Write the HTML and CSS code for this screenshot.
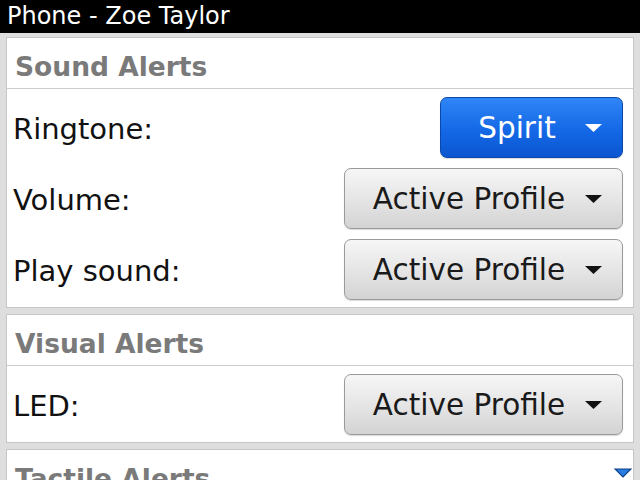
FILE: index.html
```html
<!DOCTYPE html>
<html lang="en">
  <head>
    <meta charset="UTF-8" />
    <meta name="viewport" content="width=device-width, initial-scale=1.0" />
    <title>Phone - Zoe Taylor</title>
    <link rel="stylesheet" href="styles.css">
  </head>
  <body>
    <header class="titlebar">Phone - Zoe Taylor</header>
    <main class="contenido">
      <section class="tarjeta">
        <div class="cabecera">Sound Alerts</div>
        <div class="filas">
          <div class="fila">
            <span class="etiqueta">Ringtone:</span>
            <button class="selector azul corto">
              <span class="valor">Spirit</span>
              <svg class="flecha" width="17" height="8" viewBox="0 0 17 8"><path d="M0 0H17L8.5 8Z" fill="#fff"/></svg>
            </button>
          </div>
          <div class="fila">
            <span class="etiqueta">Volume:</span>
            <button class="selector">
              <span class="valor">Active Profile</span>
              <svg class="flecha" width="17" height="8" viewBox="0 0 17 8"><path d="M0 0H17L8.5 8Z" fill="#111"/></svg>
            </button>
          </div>
          <div class="fila">
            <span class="etiqueta">Play sound:</span>
            <button class="selector">
              <span class="valor">Active Profile</span>
              <svg class="flecha" width="17" height="8" viewBox="0 0 17 8"><path d="M0 0H17L8.5 8Z" fill="#111"/></svg>
            </button>
          </div>
        </div>
      </section>

      <section class="tarjeta">
        <div class="cabecera">Visual Alerts</div>
        <div class="filas">
          <div class="fila">
            <span class="etiqueta">LED:</span>
            <button class="selector">
              <span class="valor">Active Profile</span>
              <svg class="flecha" width="17" height="8" viewBox="0 0 17 8"><path d="M0 0H17L8.5 8Z" fill="#111"/></svg>
            </button>
          </div>
        </div>
      </section>

      <section class="tarjeta">
        <div class="cabecera">Tactile Alerts</div>
      </section>
    </main>

    <!-- indicador de scroll -->
    <svg class="scroll" width="18" height="10" viewBox="0 0 18 10"><path d="M1 1H17L9 9Z" fill="#2a7de0" stroke="#0c3f88" stroke-width="1.2"/></svg>
  </body>
</html>
```

FILE: styles.css
```css
body{
    margin: 0;
    width: 640px;
    height: 480px;
    overflow: hidden;
    background-color: #dedede;
    font-family: "DejaVu Sans", sans-serif;
    position: relative;
}
.titlebar{
    height: 33px;
    background-color: #000;
    color: #fff;
    font-size: 24px;
    line-height: 33px;
    padding-left: 7px;
    box-sizing: border-box;
}
.contenido{
    display: flex;
    flex-direction: column;
    gap: 6px;
    padding: 4px 6px 0 6px;
}
.tarjeta{
    background-color: #fff;
    border: 1px solid #c6c6c6;
}
.cabecera{
    height: 51px;
    border-bottom: 1px solid #cdcdcd;
    display: flex;
    align-items: center;
    padding: 6px 0 0 8px;
    box-sizing: border-box;
    font-size: 26.5px;
    font-weight: bold;
    color: #7a7a7a;
}
.filas{
    display: flex;
    flex-direction: column;
    gap: 10px;
    padding: 8px 10px 7px 6px;
}
.fila{
    display: flex;
    justify-content: space-between;
    align-items: center;
    height: 61px;
}
.etiqueta{
    font-size: 29px;
    color: #111;
    padding-top: 2px;
}
.selector{
    display: flex;
    align-items: center;
    width: 279px;
    height: 61px;
    padding: 0 20px 0 10px;
    box-sizing: border-box;
    border: 1px solid #9a9a9a;
    border-radius: 7px;
    background: linear-gradient(to bottom, #f6f6f6, #e4e4e4 55%, #d3d3d3);
    box-shadow: 0 1px 1px rgba(0, 0, 0, 0.15);
    font-family: "DejaVu Sans", sans-serif;
    font-size: 29.5px;
    color: #1a1a1a;
}
.selector .valor{
    flex: 1;
    text-align: center;
    padding-left: 12px;
}
.selector .flecha{
    margin-left: 14px;
    flex: none;
}
.azul{
    background: linear-gradient(to bottom, #2f86f6, #1468e6 55%, #0b56d0);
    border-color: #0b48a8;
    color: #fff;
}
.corto{
    width: 183px;
}
.scroll{
    position: absolute;
    right: 8px;
    bottom: 2px;
}
```
